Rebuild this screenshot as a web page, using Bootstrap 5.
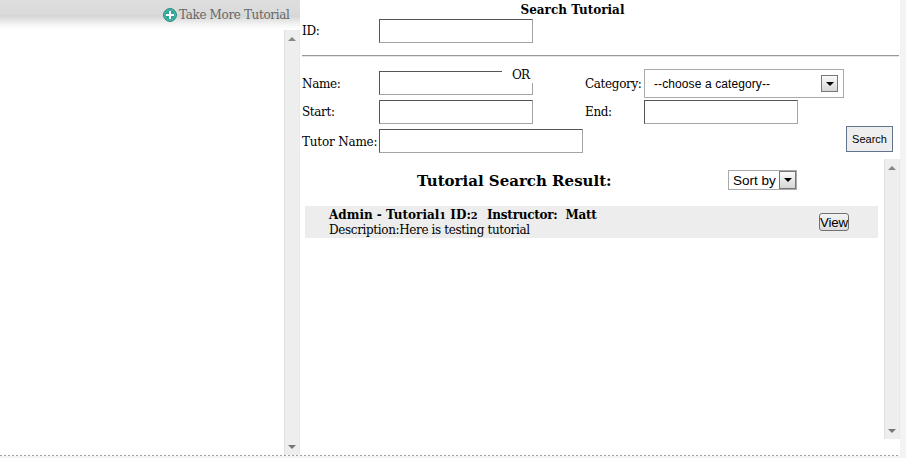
<!DOCTYPE html>
<html lang="en">
<head>
<meta charset="utf-8">
<meta name="viewport" content="width=device-width, initial-scale=1">
<title>Search Tutorial</title>
<link href="https://cdn.jsdelivr.net/npm/bootstrap@5.3.0/dist/css/bootstrap.min.css" rel="stylesheet">
<style>
body{background:#f3f3f3;color:#000;font:12px/15px "DejaVu Serif",serif;letter-spacing:-.36px;height:458px}
.fw-bold{letter-spacing:0}
.main-area{width:900px;height:456px;background:#fff}
.dash-line{height:1px;width:899px;margin-top:-1px;background:repeating-linear-gradient(90deg,#9aa0a5 0 2px,#fff 2px 4px)}
.left-pane{width:300px;height:455px}
.left-head{height:30px;background:linear-gradient(#dedede 0,#dadada 14px,#d5d5d5 16px,#e4e4e4 20px,#f6f6f6 25px,#fff 29px);color:#666;padding:0 10px 0 163px}
.plus-icon{margin-top:8px}
.take-link{margin:8px 0 0 2px}
.scroll-track{width:16px;background:#eee;border-left:1px solid #e0e0e0;border-right:1px solid #e8e8e8;padding:7px 0 6px}
.right-pane{width:600px;height:455px;padding-left:2px}
.ttl{height:19px;width:541px;padding-top:3px;line-height:15px}
.lb{width:77px}
.lb2{width:59px}
.fld{width:154px;height:24px;border:1px solid #a5a5a5;border-top-color:#555;border-left-color:#555;border-radius:0;padding:0;background:#fff}
.fld-wide{width:204px}
.rule-line{height:2px;width:597px;margin-top:12px;background:#999;border-bottom:1px solid #e5e5e5}
.name-row{height:29px;margin-top:12px}
.name-row .lb,.name-row .lb2{padding-top:2px}
.name-field{height:26px}
.gap-end{margin-left:52px}
.or-tag{left:123px;top:-3px;width:33px;height:15px;background:#fff;padding-left:10px;letter-spacing:-.8px}
.sans{font-family:"Liberation Sans",Arial,sans-serif;letter-spacing:0}
.cat-box{width:200px;height:29px;border:1px solid #aaa;padding:0 5px 0 9px;font-size:12px;letter-spacing:.1px}
.cat-text{padding-top:2px}
.drop{width:17px;height:17px;border:1px solid #777;background:linear-gradient(#fafafa,#d5d5d5)}
.start-row{margin-top:2px}
.tutor-row{margin-top:5px;height:24px}
.tutor-row .lb{padding-top:2px;letter-spacing:-.2px}
.btn-search{width:47px;height:26px;padding:0;border:1px solid #60748a;border-radius:0;background:#eee;color:#000;font-size:11px;line-height:24px;margin:-4px 7px 0 0}
.results{height:280px;margin-top:6px}
.res-head{height:47px;padding-left:115px}
.res-title{font-size:15px;line-height:20px;width:311px;margin:12px 0 0}
.sort-box{width:69px;height:20px;border:1px solid #aaa;font-size:13.5px;line-height:19px;padding-left:4px;margin-top:11px}
.sort-box .drop{height:18px}
.res-item{height:32px;width:573px;margin-left:3px;background:#ededed;padding:2px 29px 0 24px}
.item-name{width:158px}
.item-tutor{letter-spacing:-.25px}
.btn-view{width:30px;height:18px;padding:0;border:1px solid #707070;border-radius:3px;background:linear-gradient(#f3f3f3,#ddd);color:#000;font-size:13.3px;line-height:17px;margin-top:5px;letter-spacing:-.2px}
.old-num{font-size:.82em}
</style>
</head>
<body>
<main class="main-area d-flex">
  <section class="left-pane d-flex flex-column flex-shrink-0">
    <div class="left-head d-flex">
      <svg class="plus-icon flex-shrink-0" width="14" height="14" viewBox="0 0 14 14"><circle cx="7" cy="7" r="6.4" fill="#2ca596" stroke="#23857b"/><circle cx="7" cy="7" r="5.3" fill="none" stroke="#66c9b8" stroke-width=".7"/><path d="M7 3v8M3 7h8" stroke="#fff" stroke-width="2"/></svg>
      <span class="take-link text-nowrap">Take More Tutorial</span>
    </div>
    <div class="scroll-track d-flex flex-column justify-content-between align-items-center align-self-end flex-grow-1">
      <svg width="8" height="4"><path d="M4 0L8 4H0z" fill="#858585"/></svg>
      <svg width="8" height="4"><path d="M0 0H8L4 4z" fill="#777"/></svg>
    </div>
  </section>
  <section class="right-pane flex-shrink-0">
    <div class="ttl fw-bold text-center">Search Tutorial</div>
    <div class="d-flex align-items-center"><label class="lb" for="fid">ID:</label><input id="fid" class="fld"></div>
    <div class="rule-line"></div>
    <div class="name-row d-flex align-items-center">
      <label class="lb" for="fname">Name:</label>
      <div class="name-field position-relative d-flex align-items-start"><input id="fname" class="fld"><span class="or-tag position-absolute">OR</span></div>
      <span class="lb2 gap-end">Category:</span>
      <div class="cat-box sans d-flex align-items-center justify-content-between"><span class="cat-text">--choose a category--</span><span class="drop d-flex align-items-center justify-content-center"><svg width="8" height="4"><path d="M0 0H8L4 4z"/></svg></span></div>
    </div>
    <div class="start-row d-flex align-items-center"><label class="lb" for="fs">Start:</label><input id="fs" class="fld"><label class="lb2 gap-end" for="fe">End:</label><input id="fe" class="fld"></div>
    <div class="tutor-row d-flex align-items-center"><label class="lb text-nowrap" for="ft">Tutor Name:</label><input id="ft" class="fld fld-wide"><button class="btn btn-search sans ms-auto">Search</button></div>
    <div class="results d-flex justify-content-between">
      <div>
        <div class="res-head d-flex"><h1 class="res-title fw-bold text-nowrap">Tutorial Search Result:</h1>
          <div class="sort-box sans d-flex justify-content-between"><span class="text-nowrap">Sort by</span><span class="drop d-flex align-items-center justify-content-center"><svg width="8" height="4"><path d="M0 0H8L4 4z"/></svg></span></div>
        </div>
        <div class="res-item d-flex justify-content-between">
          <div class="text-nowrap"><div class="fw-bold d-flex"><span class="item-name">Admin - Tutorial<span class="old-num">1</span> ID:<span class="old-num">2</span></span><span class="item-tutor">Instructor:&nbsp; Matt</span></div><div>Description:Here is testing tutorial</div></div>
          <button class="btn btn-view sans">View</button>
        </div>
      </div>
      <div class="scroll-track d-flex flex-column justify-content-between align-items-center">
        <svg width="8" height="4"><path d="M4 0L8 4H0z" fill="#858585"/></svg>
        <svg width="8" height="4"><path d="M0 0H8L4 4z" fill="#777"/></svg>
      </div>
    </div>
  </section>
</main>
<div class="dash-line"></div>
<script src="https://cdn.jsdelivr.net/npm/bootstrap@5.3.0/dist/js/bootstrap.bundle.min.js"></script>
</body>
</html>
